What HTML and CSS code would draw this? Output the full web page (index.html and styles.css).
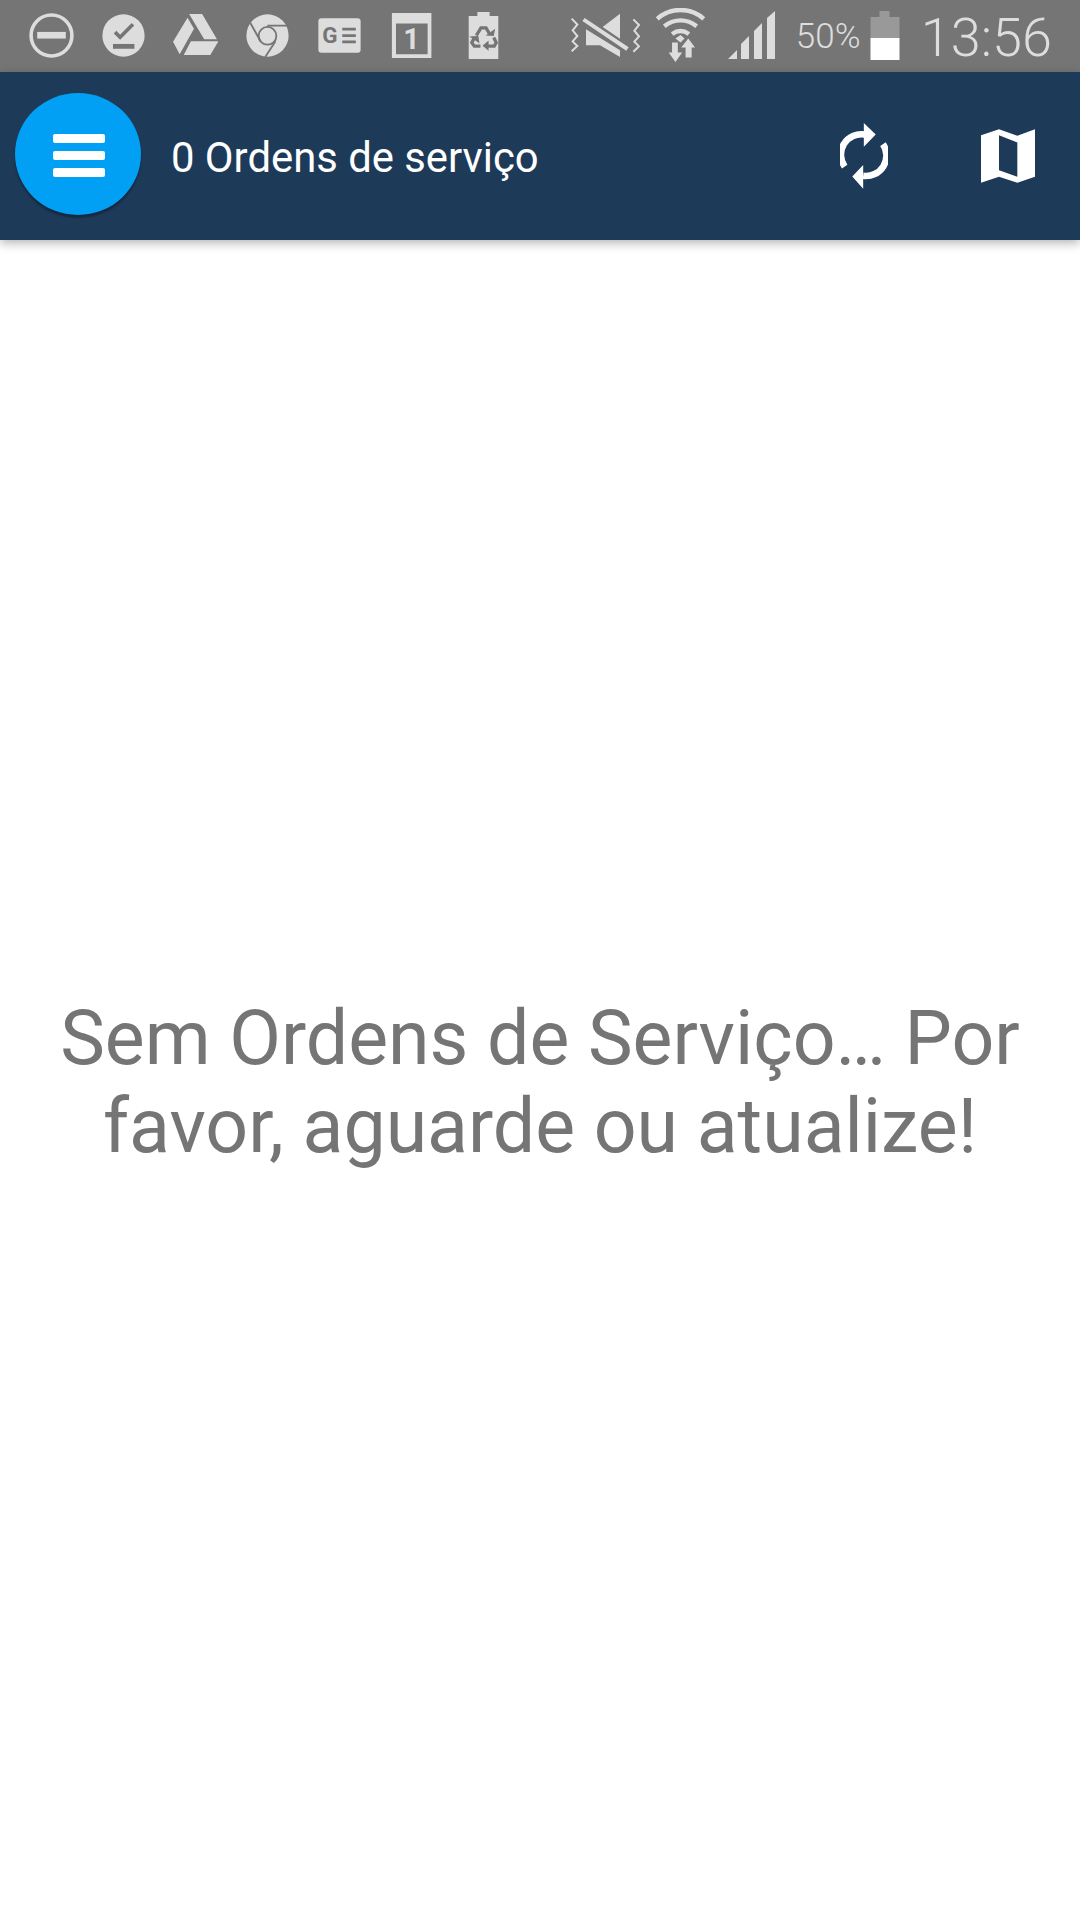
FILE: index.html
```html
<!DOCTYPE html>
<html lang="pt">
<head>
<meta charset="utf-8">
<title>Ordens de serviço</title>
<link rel="stylesheet" href="styles.css">
</head>
<body>
<div class="status">
  <div class="status-left">
    <svg class="si" viewBox="0 0 44 48"><circle cx="22" cy="24" r="20" fill="none" stroke="#ddd" stroke-width="3.5"/><rect x="8" y="20.5" width="28" height="6.5" fill="#ddd"/></svg>
    <svg class="si" viewBox="0 0 44 48"><circle cx="22" cy="24" r="20.7" fill="#ddd"/><path d="M13.7 20.7l5 5L31.3 13" fill="none" stroke="#757575" stroke-width="3.6"/><rect x="11.7" y="32.3" width="21" height="4.7" fill="#757575"/></svg>
    <svg class="si" viewBox="0 0 44 48"><path fill="#ddd" d="M15.800 3h12.700L43 27.700H30.500zM14.200 6.500l6.300 11-14 24.800L0 30zM17.500 29.700h27L36.500 43h-26z"/></svg>
    <svg class="si" viewBox="0 0 44 48"><circle cx="22" cy="24" r="20.700" fill="#ddd"/><circle cx="22" cy="24.300" r="8.700" fill="#ddd" stroke="#757575" stroke-width="1.800"/><path d="M21.800 14.300h19.400M5.200 11.700l10 18M29.800 29.700l-10 15.300" fill="none" stroke="#757575" stroke-width="1.800"/></svg>
    <svg class="si" viewBox="0 0 44 48"><rect x="1.300" y="7" width="41.400" height="34" rx="3" fill="#ddd"/><text class="news-g" x="5" y="31.500">G</text><path d="M24.700 16.300H38V19H24.700zM24.700 22.700H38v2.700H24.700zM24.700 29H38v2.700H24.700z" fill="#757575"/></svg>
    <svg class="si" viewBox="0 0 44 48"><path fill="#ddd" fill-rule="evenodd" d="M2.800 2h38.700v44H2.800zM6.800 12.300v30h31v-30z"/><text class="cal-1" x="22" y="37">1</text></svg>
    <svg class="si" viewBox="0 0 44 48"><path fill="#ddd" d="M16 1h12v4h8.500v42h-29V5H16z"/><path d="M15 24l4.500-7.500h5l3.500 6M32 26l2.500 5-2 3.500H26M19 34.500h-6l-2.500-3.500 3-5.500" fill="none" stroke="#757575" stroke-width="3.200"/><path d="M24 24l8 .5 1.500-7zM27 29v10l-6-5zM8 25l9-.5 1 7z" fill="#757575"/></svg>
  </div>
  <div class="status-right">
    <svg class="mute" viewBox="27 20 213 138"><path d="M35 40l17 18-14 17 14 17-14 16 14 14-17 16M220 42l17 17-14 17 14 17-14 16 14 14-17 16" fill="none" stroke="#ddd" stroke-width="6"/><path fill="#ddd" d="M180 25v75l-52-35zM78 72l102 63v20l-60-35H78zM74 38l132 88-7 10L67 47z"/></svg>
    <svg class="wifi" viewBox="285 8 150 160"><path d="M291 40C330 5 390 5 429 40M312 62c30-23 66-23 96 0M335 85c16-11 34-11 50 0" fill="none" stroke="#ddd" stroke-width="13"/><path fill="#ddd" d="M345 98l15-10 12 10-12 12zM335 110h17v30h13l-20 28-20-28h10zM375 155v-30h-13l21-27 20 27h-10v30z"/></svg>
    <svg class="signal" viewBox="0 0 48 48"><path fill="#ddd" d="M0 48l9-9v9zM13 48V33l8-8v23zM26 48V20l8-8v36zM39 48V7l8-7v48z"/></svg>
    <span class="pct">50%</span>
    <svg class="batt" viewBox="0 0 29 49"><path fill="#999" d="M9 0h10v6h10v21H0V6h9z"/><rect y="27" width="29" height="22" fill="#fff"/></svg>
    <span class="time">13:56</span>
  </div>
</div>
<header class="nav">
  <button class="fab"><span class="bar"></span><span class="bar"></span><span class="bar"></span></button>
  <h1 class="title">0 Ordens de serviço</h1>
  <svg class="sync" viewBox="120 68 145 200"><path d="M134 200A62 62 0 0 1 195 103M250 132A62 62 0 0 1 190 228" fill="none" stroke="#fff" stroke-width="20"/><path fill="#fff" d="M192 68l36 35-36 37zM190 195l-33 35 33 37z"/></svg>
  <svg class="map" viewBox="543 87 162 161"><path fill="#fff" fill-rule="evenodd" d="M543 105l54-18 55 20 53-20v143l-53 18-55-18-54 18zM597 105v105l55 20V127z"/></svg>
</header>
<main class="empty"><p class="msg">Sem Ordens de Serviço… Por favor, aguarde ou atualize!</p></main>
</body>
</html>
```
FILE: styles.css
```css
* { box-sizing: border-box; }
html, body { margin: 0; height: 100%; background: #fff; }
body { width: 1080px; height: 1920px; overflow: hidden; display: flex; flex-direction: column; font-family: Roboto, sans-serif; }
.status { height: 72px; flex: none; background: #757575; display: flex; align-items: center; justify-content: space-between; padding: 0 28px 2px 29px; }
.status-left { display: flex; gap: 27px; }
.si { width: 45px; height: 49px; display: block; flex: none; }
.news-g { font: 700 22px Roboto, sans-serif; fill: #757575; }
.cal-1 { font: 700 28px Roboto, sans-serif; fill: #ddd; text-anchor: middle; }
.status-right { display: flex; align-items: center; }
.mute { width: 71px; height: 46px; display: block; flex: none; margin-right: 15px; }
.wifi { width: 51px; height: 54px; display: block; flex: none; margin-right: 22px; }
.signal { width: 48px; height: 48px; display: block; flex: none; margin-right: 20px; }
.pct { font-size: 35px; font-weight: 300; color: #ddd; width: 63px; margin: 3px 11px 0 0; white-space: nowrap; }
.batt { width: 30px; height: 49px; display: block; flex: none; margin-right: 21px; }
.time { font-size: 54px; font-weight: 300; color: #ddd; line-height: 1; margin-top: 5px; white-space: nowrap; }
.nav { height: 168px; flex: none; background: #1e3a59; display: flex; align-items: center; padding: 0 45px 0 15px; box-shadow: 0 3px 10px rgba(0,0,0,.3); position: relative; }
.fab { width: 126px; height: 122px; margin-bottom: 4px; border: 0; border-radius: 50%; background: #02a0f4; box-shadow: 0 3px 2px rgba(0,0,0,.3); display: flex; flex-direction: column; align-items: center; justify-content: center; gap: 8px; padding: 3px 0 0 2px; flex: none; }
.bar { width: 52px; height: 9px; border-radius: 2px; background: #fff; display: block; }
.title { margin: 2px 0 0 30px; font-size: 41.8px; font-weight: 400; color: #fff; flex: 1; white-space: nowrap; }
.sync { width: 48px; height: 66px; display: block; flex: none; margin-right: 93px; }
.map { width: 54px; height: 54px; display: block; flex: none; }
.empty { flex: 1; display: flex; justify-content: center; padding: 754px 50px 0; }
.msg { margin: 0; font-size: 75.2px; line-height: 88px; color: #757575; text-align: center; }
```
